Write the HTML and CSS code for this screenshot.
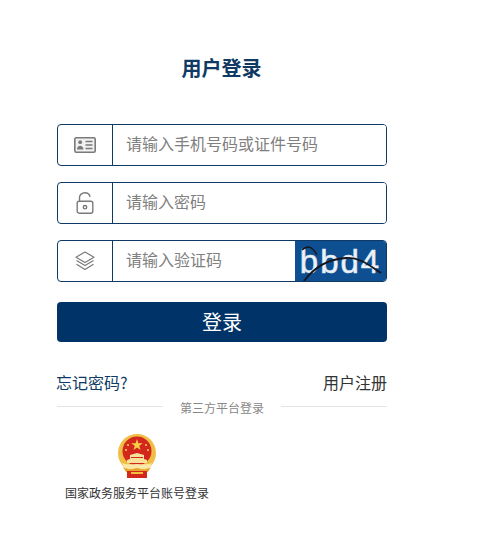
FILE: index.html
```html
<!DOCTYPE html>
<html lang="zh-CN">
<head>
  <meta charset="UTF-8" />
  <meta name="viewport" content="width=device-width, initial-scale=1" />
  <title>用户登录</title>
  <link rel="stylesheet" href="styles.css">
</head>
<body>
  <div class="login">
    <h1 class="title">用户登录</h1>
    <form class="login-form">
      <div class="field">
        <span class="field-icon">
          <svg width="22" height="16" viewBox="0 0 22 16" fill="none" stroke="#7a7a7a" stroke-width="1.6">
            <rect x="0.8" y="0.8" width="20.4" height="14.4" rx="1.5" fill="#f1f1f1"/>
            <circle cx="6.2" cy="5.2" r="1.9" fill="#7a7a7a" stroke="none"/>
            <path d="M3 12.4c0-5 6.400-5 6.400 0z" fill="#7a7a7a" stroke="none"/>
            <path d="M11.500 4.500h7M11.500 8h7M11.500 11.500h7"/>
          </svg>
        </span>
        <input class="field-input" type="text" placeholder="请输入手机号码或证件号码" />
      </div>
      <div class="field">
        <span class="field-icon">
          <svg width="18" height="22" viewBox="0 0 18 22" fill="none" stroke="#7a7a7a" stroke-width="1.4">
            <rect x="1.200" y="9.200" width="15.600" height="12" rx="2"/>
            <circle cx="9" cy="15.200" r="1.700"/>
            <path d="M3.500 9V5.500C3.500 2.800 6 .8 8.800 .8s4.800 1.800 5.200 4"/>
          </svg>
        </span>
        <input class="field-input" type="text" placeholder="请输入密码" />
      </div>
      <div class="field">
        <span class="field-icon">
          <svg width="20" height="20" viewBox="0 0 20 20" fill="none" stroke="#7a7a7a" stroke-width="1.2" stroke-linejoin="round">
            <path d="M10 1l9 5.200-9 5.200-9-5.200z"/>
            <path d="M1.500 9.600L10 14.600l8.500-5"/>
            <path d="M1.500 13.200L10 18.400l8.500-5.200"/>
          </svg>
        </span>
        <input class="field-input" type="text" placeholder="请输入验证码" />
        <div class="captcha">
          <span class="captcha-text">bbd4</span>
          <svg class="captcha-line" width="91" height="42" viewBox="0 0 91 42" fill="none" stroke="#16161e" stroke-width="1.800">
            <path d="M9 40C18 28 32 18 51 17c14-1 24 8 35 15"/>
            <path d="M7 9c2-2 5-3 7-3s6 4 8 8" stroke-width="1.500"/>
          </svg>
        </div>
      </div>
      <button class="submit" type="button">登录</button>
    </form>
    <div class="links">
      <a class="link-forgot" href="#">忘记密码?</a>
      <a class="link-reg" href="#">用户注册</a>
    </div>
    <div class="divider"><span class="divider-text">第三方平台登录</span></div>
    <a class="gov" href="#">
      <svg width="40" height="44" viewBox="0 0 40 44">
        <circle cx="20" cy="19" r="19" fill="#f0bd45"/>
        <circle cx="20" cy="17" r="14.500" fill="#d3261c"/>
        <path d="M20 5l1.400 4.200h4.400l-3.600 2.600 1.400 4.200-3.600-2.600-3.600 2.600 1.400-4.200-3.600-2.600h4.400z" fill="#f7d04a"/>
        <circle cx="11" cy="11" r="1.100" fill="#f7d04a"/>
        <circle cx="29" cy="11" r="1.100" fill="#f7d04a"/>
        <circle cx="9" cy="16" r="1.100" fill="#f7d04a"/>
        <circle cx="31" cy="16" r="1.100" fill="#f7d04a"/>
        <path d="M13 25v-4l7-2 7 2v4l3 1v3H10v-3z" fill="#f6e39a"/>
        <path d="M14 23h12v1H14z" fill="#d3261c"/>
        <path d="M5 29c4 2 10 1 15 1s11 1 15-1l-2 4c-4 3-9 2-13 1-4 1-9 2-13-1z" fill="#f9e8a8"/>
        <path d="M6 33c4 3 10 3 14 1 4 2 10 2 14-1l-3 5H9z" fill="#e7a52c"/>
        <path d="M10 37h20v7H10z" fill="#d3261c"/>
        <path d="M14 38h12v2H14z" fill="#f2bf3c"/>
      </svg>
      <span class="gov-text">国家政务服务平台账号登录</span>
    </a>
  </div>
</body>
</html>
```

FILE: styles.css
```css
* {
  box-sizing: border-box;
}
body {
  margin: 0;
  background: #fff;
  font-family: "Noto Sans CJK SC", "Open Sans", sans-serif;
}
a {
  text-decoration: none;
}
.login {
  width: 330px;
  margin-left: 57px;
  padding-top: 53px;
}
.title {
  margin: 0 0 42px;
  padding-right: 1px;
  height: 29px;
  line-height: 29px;
  font-size: 20px;
  font-weight: 700;
  text-align: center;
  color: #0f3a63;
}
.field {
  display: flex;
  height: 42px;
  margin-bottom: 16px;
  border: 1px solid #0f3a63;
  border-radius: 4px;
  overflow: hidden;
}
.field-icon {
  display: flex;
  flex: none;
  align-items: center;
  justify-content: center;
  width: 55px;
  border-right: 1px solid #0f3a63;
}
.field-input {
  flex: 1;
  min-width: 0;
  padding: 0 13px 5px;
  border: none;
  outline: none;
  font-family: inherit;
  font-size: 16px;
  color: #333;
}
.field-input::placeholder {
  color: #808080;
  opacity: 1;
}
.captcha {
  position: relative;
  flex: none;
  width: 91px;
  background: #0e4f91;
  text-align: center;
  overflow: hidden;
}
.captcha-text {
  font-family: "Liberation Sans", sans-serif;
  font-size: 33px;
  line-height: 42px;
  letter-spacing: 2px;
  color: #eef3f8;
  -webkit-text-stroke: 0.6px #dfe8f1;
}
.captcha-line {
  position: absolute;
  top: 0;
  left: 0;
}
.submit {
  display: block;
  width: 100%;
  height: 40px;
  margin-top: 20px;
  padding: 0 0 2px;
  border: none;
  border-radius: 4px;
  background: #003468;
  color: #fff;
  font-family: inherit;
  font-size: 20px;
  cursor: pointer;
}
.links {
  display: flex;
  justify-content: space-between;
  margin-top: 28px;
  line-height: 24px;
  font-size: 16px;
}
.link-forgot {
  margin-left: -1px;
  color: #0f3a63;
}
.link-reg {
  color: #333;
}
.divider {
  display: flex;
  align-items: center;
  gap: 17px;
  margin-top: 2px;
  height: 20px;
  font-size: 12px;
  color: #888;
}
.divider-text {
  padding-top: 2px;
}
.divider::before,
.divider::after {
  content: "";
  flex: 1;
  height: 1px;
  background: #e4e4e4;
}
.gov {
  display: flex;
  flex-direction: column;
  align-items: center;
  width: 160px;
  margin-top: 18px;
}
.gov-text {
  margin-top: 6px;
  font-size: 12px;
  line-height: 18px;
  color: #333;
  white-space: nowrap;
}
```
